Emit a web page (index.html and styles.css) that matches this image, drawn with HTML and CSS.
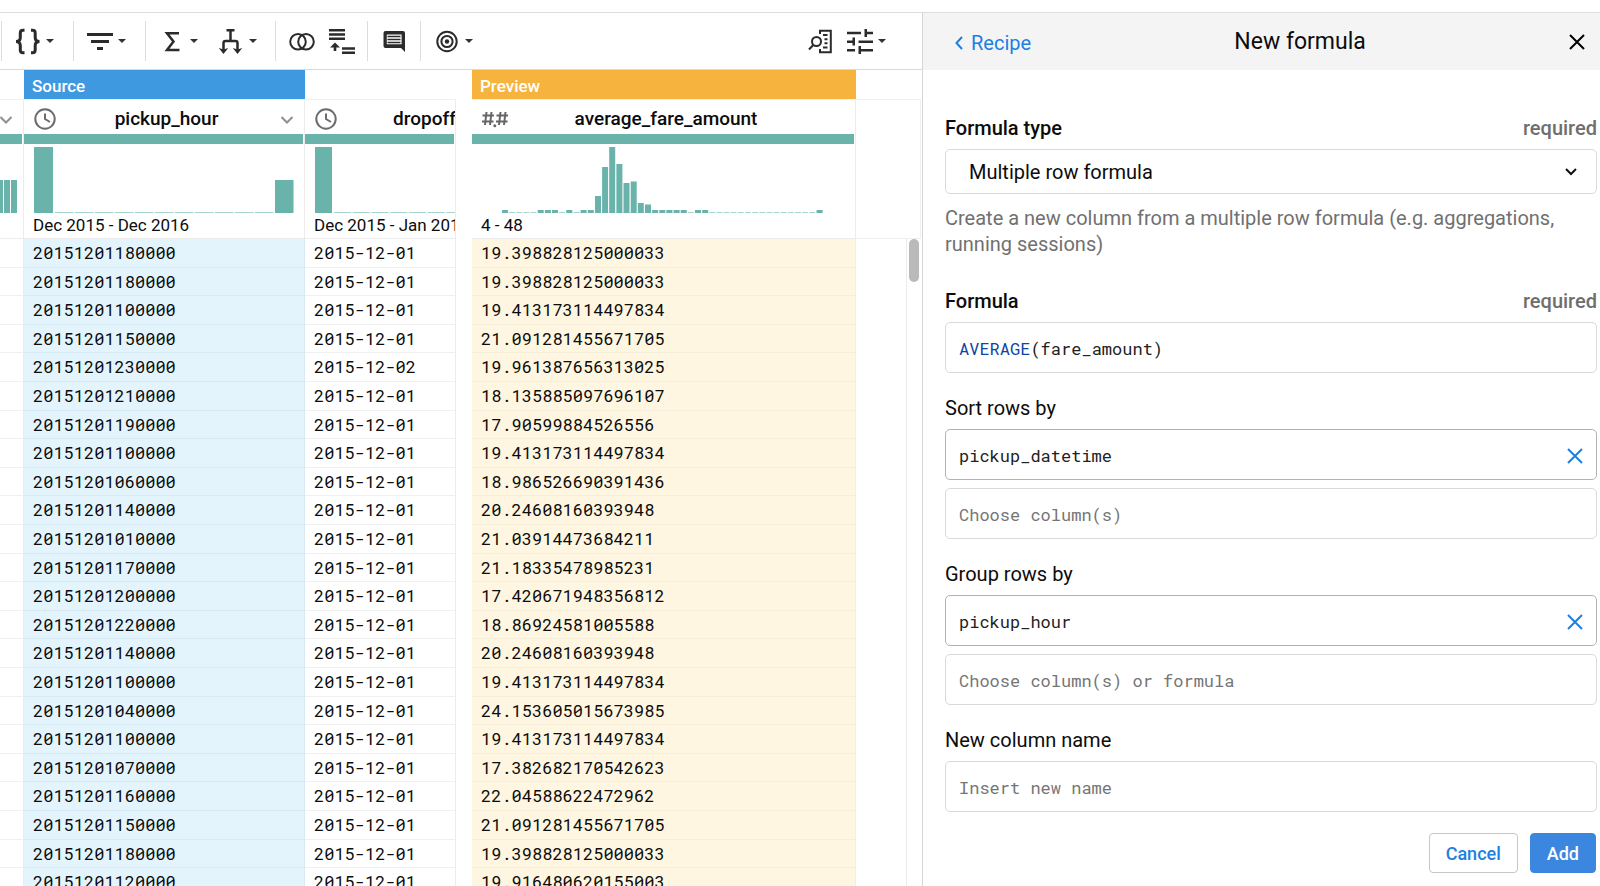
FILE: index.html
```html
<!DOCTYPE html>
<html lang="en">
<head>
<meta charset="utf-8">
<title>New formula</title>
<link rel="stylesheet" href="styles.css">
</head>
<body>
<div class="app">
  <main class="workspace">
    <div class="toolbar" role="toolbar" aria-label="Transform tools">
      <div class="tool-group">
        <button class="tool" aria-label="Format"><svg class="icon" viewBox="0 0 26 26"><path d="M9.500 2.300H8Q5.300 2.300 5.300 5V9.500Q5.300 13.500 1 13.500Q5.300 13.500 5.300 17.500V22Q5.300 24.700 8 24.700H9.500M16 2.300h1.500Q20.200 2.300 20.200 5V9.500Q20.200 13.500 24.500 13.500Q20.200 13.500 20.200 17.500V22Q20.200 24.700 17.500 24.700H16" class="line braces"/></svg><svg class="caret" viewBox="0 0 8 4"><path d="M0 0h8L4 4z"/></svg></button>
      </div>
      <div class="tool-group">
        <button class="tool" aria-label="Filter"><svg class="icon" viewBox="0 0 26 26"><path d="M0 5h26v3H0zM4 12h18v3H4zM10 19h6v3h-6z"/></svg><svg class="caret" viewBox="0 0 8 4"><path d="M0 0h8L4 4z"/></svg></button>
      </div>
      <div class="tool-group transforms">
        <button class="tool" aria-label="Aggregate"><svg class="icon" viewBox="0 0 26 26"><path d="M20 5.300H8L14.500 13.500 8 22H20.500" class="line heavy"/></svg><svg class="caret" viewBox="0 0 8 4"><path d="M0 0h8L4 4z"/></svg></button>
        <button class="tool" aria-label="Restructure"><svg class="icon" viewBox="0 0 26 26"><path d="M8.500 2.200h8M12.500 2v10.500M5.500 22v-7q0-2 2-2h10q2 0 2 2v7" class="line heavy"/><path d="M0.800 20l4.700 1.500 4.700-1.500-4.700 6zM14.800 20l4.700 1.500 4.700-1.500-4.700 6z"/></svg><svg class="caret" viewBox="0 0 8 4"><path d="M0 0h8L4 4z"/></svg></button>
      </div>
      <div class="tool-group even">
        <button class="tool" aria-label="Join"><svg class="icon" viewBox="0 0 26 26"><circle cx="9" cy="13.700" r="7.800" class="line"/><circle cx="17" cy="13.700" r="7.800" class="line"/></svg></button>
        <button class="tool" aria-label="Union"><svg class="icon" viewBox="0 0 26 26"><path d="M1 1h16v2.400H1zM1 5.300h16v2.400H1zM1 9.600h16v2.400H1zM14 19.300h13v2.400H14zM14 23.600h13v2.400H14zM7 14.500l5 5H8.300v3.500H5.700v-3.500H2z"/></svg></button>
      </div>
      <div class="tool-group even">
        <button class="tool" aria-label="Comment"><svg class="icon" viewBox="0 0 26 26"><path fill-rule="evenodd" d="M4.500 3h17.500a2 2 0 0 1 2 2v19l-4-4H4.500a2 2 0 0 1-2-2V5a2 2 0 0 1 2-2zM5.800 6.500v9.800h14.800V6.500z"/><path d="M6.500 7.700h13v1.500h-13zM6.500 10.700h13v1.500h-13zM6.500 13.700h13v1.500h-13z"/></svg></button>
      </div>
      <div class="tool-group">
        <button class="tool" aria-label="Target"><svg class="icon" viewBox="0 0 26 26"><circle cx="13" cy="13.500" r="9.700" class="line"/><circle cx="13" cy="13.500" r="5.600" class="line"/><circle cx="13" cy="13.500" r="2.200"/></svg><svg class="caret" viewBox="0 0 8 4"><path d="M0 0h8L4 4z"/></svg></button>
      </div>
      <div class="tool-group view-tools">
        <button class="tool" aria-label="Find column"><svg class="icon" viewBox="0 0 26 26"><path d="M12 6V2.800h10.800v21.400H12V21" class="line"/><circle cx="8.500" cy="13.500" r="4.500" class="line"/><path d="M5.300 17L1 21.500M15 7h4.500M16.500 11.200h3M16.500 15.200h3M15 19.500h4.500" class="line"/></svg></button>
        <button class="tool" aria-label="View options"><svg class="icon" viewBox="0 0 26 26"><path d="M0 3.800h14v2.500H0zM17.500 1H20v2.800h6v2.500h-6V9h-2.500zM0 12.400h5.500V9.600H8v8H5.500v-2.700H0zM11.500 12.400H26v2.500H11.500zM0 21h8v2.500H0zM11.500 18H14v3h12v2.500H14V26h-2.500z"/></svg><svg class="caret" viewBox="0 0 8 4"><path d="M0 0h8L4 4z"/></svg></button>
      </div>
    </div>

    <div class="grid">
      <table class="source-table">
        <colgroup><col class="col-edge"><col class="col-wide"><col></colgroup>
        <thead>
          <tr class="banner"><td></td><td class="banner-source">Source</td><td></td></tr>
          <tr class="profile">
            <th scope="col" aria-label="Previous column">
              <div class="name-row edge"><svg class="chevron" viewBox="0 0 14 14"><path d="M0.500 5l5.500 5.500L11.500 5"/></svg></div>
              <div class="quality"></div>
              <svg class="histogram" width="20" height="69"><path class="bar" d="M0 36h3v33H0zM4 36h6v33H4zM11 36h6v33h-6z"/></svg>
            </th>
            <th scope="col">
              <div class="name-row"><span class="type"><svg class="clock" viewBox="0 0 22 22"><circle cx="11" cy="11" r="9.700"/><path d="M11 5.500V11l5 3"/></svg></span><span class="name">pickup_hour</span><span class="menu"><svg class="chevron" viewBox="0 0 14 14"><path d="M0.500 5l5.500 5.500L11.500 5"/></svg></span></div>
              <div class="quality"></div>
              <svg class="histogram" width="280" height="69"><path class="bar" d="M10 3h19v66H10zM251 36h18.500v33H251z"/><path class="thin" d="M31 68.500H250" stroke-dasharray="18.500 1.500"/></svg>
              <div class="range">Dec 2015 - Dec 2016</div>
            </th>
            <th scope="col">
              <div class="name-row clipped"><span class="type"><svg class="clock" viewBox="0 0 22 22"><circle cx="11" cy="11" r="9.700"/><path d="M11 5.500V11l5 3"/></svg></span><span class="name">dropoff_hour</span><span class="menu"></span></div>
              <div class="quality"></div>
              <svg class="histogram" width="280" height="69"><path class="bar" d="M10 3h17v66H10z"/><path class="thin" d="M29 68.500H270" stroke-dasharray="17.200 1.500"/></svg>
              <div class="range">Dec 2015 - Jan 2016</div>
            </th>
          </tr>
        </thead>
        <tbody>
          <tr><td></td><td>20151201180000</td><td>2015-12-01</td></tr>
          <tr><td></td><td>20151201180000</td><td>2015-12-01</td></tr>
          <tr><td></td><td>20151201100000</td><td>2015-12-01</td></tr>
          <tr><td></td><td>20151201150000</td><td>2015-12-01</td></tr>
          <tr><td></td><td>20151201230000</td><td>2015-12-02</td></tr>
          <tr><td></td><td>20151201210000</td><td>2015-12-01</td></tr>
          <tr><td></td><td>20151201190000</td><td>2015-12-01</td></tr>
          <tr><td></td><td>20151201100000</td><td>2015-12-01</td></tr>
          <tr><td></td><td>20151201060000</td><td>2015-12-01</td></tr>
          <tr><td></td><td>20151201140000</td><td>2015-12-01</td></tr>
          <tr><td></td><td>20151201010000</td><td>2015-12-01</td></tr>
          <tr><td></td><td>20151201170000</td><td>2015-12-01</td></tr>
          <tr><td></td><td>20151201200000</td><td>2015-12-01</td></tr>
          <tr><td></td><td>20151201220000</td><td>2015-12-01</td></tr>
          <tr><td></td><td>20151201140000</td><td>2015-12-01</td></tr>
          <tr><td></td><td>20151201100000</td><td>2015-12-01</td></tr>
          <tr><td></td><td>20151201040000</td><td>2015-12-01</td></tr>
          <tr><td></td><td>20151201100000</td><td>2015-12-01</td></tr>
          <tr><td></td><td>20151201070000</td><td>2015-12-01</td></tr>
          <tr><td></td><td>20151201160000</td><td>2015-12-01</td></tr>
          <tr><td></td><td>20151201150000</td><td>2015-12-01</td></tr>
          <tr><td></td><td>20151201180000</td><td>2015-12-01</td></tr>
          <tr><td></td><td>20151201120000</td><td>2015-12-01</td></tr>
        </tbody>
      </table>

      <table class="preview-table">
        <thead>
          <tr class="banner"><td class="banner-preview">Preview</td></tr>
          <tr class="profile">
            <th scope="col">
              <div class="name-row"><span class="type"><svg class="decimal" viewBox="0 0 26 18"><path d="M4.500 2L3 15M9.500 2L8 15M0.500 5.500H12M0 11.500h11.500M18.500 2L17 15M23.500 2L22 15M14.500 5.500H26M14 11.500h11.500"/><circle cx="12.800" cy="15.700" r="1.500"/></svg></span><span class="name">average_fare_amount</span><span class="menu"></span></div>
              <div class="quality"></div>
              <svg class="histogram" width="380" height="69"><path class="thin" d="M30 68.500H350" stroke-dasharray="5.750 1.400"/><path class="bar" transform="translate(-1 0)" d="M31 66h6v3h-6zM66.700 66h6v3h-6zM73.900 66h6v3h-6zM81 66h6v3h-6zM95.300 66h6v3h-6zM109.600 66h6v3h-6zM116.800 66h6v3h-6zM124 52h6v17h-6zM131.100 23h6v46h-6zM138.200 3h6v66h-6zM145.400 20h6v49h-6zM152.500 39h6v30h-6zM159.700 37.500h6v31.500h-6zM166.800 59h6v10h-6zM174 60.500h6v8.500h-6zM181.100 66h6v3h-6zM188.300 66h6v3h-6zM195.400 66h6v3h-6zM202.600 66h6v3h-6zM209.700 66h6v3h-6zM224 66h6v3h-6zM231.200 66h6v3h-6zM345.600 66h6v3h-6z"/></svg>
              <div class="range">4 - 48</div>
            </th>
          </tr>
        </thead>
        <tbody>
          <tr><td>19.398828125000033</td></tr>
          <tr><td>19.398828125000033</td></tr>
          <tr><td>19.413173114497834</td></tr>
          <tr><td>21.091281455671705</td></tr>
          <tr><td>19.961387656313025</td></tr>
          <tr><td>18.135885097696107</td></tr>
          <tr><td>17.90599884526556</td></tr>
          <tr><td>19.413173114497834</td></tr>
          <tr><td>18.986526690391436</td></tr>
          <tr><td>20.24608160393948</td></tr>
          <tr><td>21.03914473684211</td></tr>
          <tr><td>21.18335478985231</td></tr>
          <tr><td>17.420671948356812</td></tr>
          <tr><td>18.86924581005588</td></tr>
          <tr><td>20.24608160393948</td></tr>
          <tr><td>19.413173114497834</td></tr>
          <tr><td>24.153605015673985</td></tr>
          <tr><td>19.413173114497834</td></tr>
          <tr><td>17.382682170542623</td></tr>
          <tr><td>22.04588622472962</td></tr>
          <tr><td>21.091281455671705</td></tr>
          <tr><td>19.398828125000033</td></tr>
          <tr><td>19.916480620155003</td></tr>
        </tbody>
      </table>

      <div class="gutter">
        <div class="gutter-head"></div>
        <div class="scroll-track"><div class="scroll-thumb"></div></div>
      </div>
    </div>
  </main>

  <aside class="panel">
    <header class="panel-head">
      <a class="back" href="#recipe"><svg viewBox="0 0 8 14"><path d="M7 1L1.500 7 7 13"/></svg>Recipe</a>
      <h1>New formula</h1>
      <button class="close" aria-label="Close"><svg class="cross" viewBox="0 0 16 16"><path d="M1 1l14 14M15 1L1 15"/></svg></button>
    </header>
    <form class="panel-form">
      <div class="field">
        <div class="label-row strong"><label for="type">Formula type</label><span class="required">required</span></div>
        <div class="select-box">
          <select id="type"><option>Multiple row formula</option></select>
          <svg viewBox="0 0 12 8"><path d="M1 1l5 5 5-5"/></svg>
        </div>
        <p class="hint">Create a new column from a multiple row formula (e.g. aggregations, running sessions)</p>
      </div>
      <div class="field after-hint">
        <div class="label-row strong"><span id="formula-label">Formula</span><span class="required">required</span></div>
        <div class="box" role="textbox" contenteditable="true" spellcheck="false" aria-labelledby="formula-label"><span class="fn">AVERAGE</span>(fare_amount)</div>
      </div>
      <div class="field">
        <div class="label-row"><label for="sort">Sort rows by</label></div>
        <div class="stack">
          <div class="box chosen"><input id="sort" value="pickup_datetime"><button type="button" class="clear" aria-label="Remove pickup_datetime"><svg class="cross" viewBox="0 0 16 16"><path d="M1 1l14 14M15 1L1 15"/></svg></button></div>
          <div class="box"><input placeholder="Choose column(s)" aria-label="Sort column"></div>
        </div>
      </div>
      <div class="field">
        <div class="label-row"><label for="group">Group rows by</label></div>
        <div class="stack">
          <div class="box chosen"><input id="group" value="pickup_hour"><button type="button" class="clear" aria-label="Remove pickup_hour"><svg class="cross" viewBox="0 0 16 16"><path d="M1 1l14 14M15 1L1 15"/></svg></button></div>
          <div class="box"><input placeholder="Choose column(s) or formula" aria-label="Group column"></div>
        </div>
      </div>
      <div class="field">
        <div class="label-row"><label for="name">New column name</label></div>
        <div class="box"><input id="name" placeholder="Insert new name"></div>
      </div>
      <div class="actions">
        <button type="button" class="btn">Cancel</button>
        <button type="button" class="btn primary">Add</button>
      </div>
    </form>
  </aside>
</div>
</body>
</html>
```
FILE: styles.css
```css
* { box-sizing: border-box; }
body {
  margin: 0;
  background: #fff;
  color: #0c0c0c;
  font-family: Roboto, "Liberation Sans", sans-serif;
}
button { padding: 0; border: 0; background: none; font: inherit; cursor: pointer; }

.app {
  display: grid;
  grid-template-columns: minmax(0, 1fr) 678px;
  height: 100vh;
  padding-top: 12px;
  overflow: hidden;
}
.workspace { min-width: 0; border-top: 1px solid #ddd; overflow: hidden; }

/* Toolbar */
.toolbar {
  display: flex;
  align-items: center;
  height: 57px;
  padding: 0 36px 0 1px;
  border-bottom: 1px solid #d9d9d9;
}
.tool-group {
  display: flex;
  align-items: center;
  gap: 20px;
  height: 40px;
  padding: 0 19px 0 13px;
  border-left: 1px solid #dcdcdc;
}
.tool-group.transforms { padding-right: 18px; }
.tool-group.even { gap: 13px; padding-right: 13px; }
.view-tools { gap: 13px; margin-left: auto; padding: 0; border: 0; }
.tool { display: flex; align-items: center; gap: 5px; }
.icon { width: 26px; height: 26px; fill: #2b2b2b; overflow: visible; }
.icon .line { fill: none; stroke: #2b2b2b; stroke-width: 2; }
.icon .heavy { stroke-width: 2.5; }
.icon .braces { stroke-width: 3; }
.caret { width: 8px; height: 4px; fill: #333; }

/* Data grid */
.grid { display: flex; align-items: flex-start; }
table { border-collapse: separate; border-spacing: 0; table-layout: fixed; }
.source-table { width: 456px; margin-right: 16px; }
.preview-table { width: 384px; }
.col-edge { width: 24px; }
.col-wide { width: 281px; }

td, th { padding: 0; overflow: hidden; border-right: 1px solid #ececec; }
.banner td {
  height: 29px;
  padding: 2px 0 0 8px;
  border: 0;
  color: #fff;
  font-size: 17px;
  font-weight: 500;
}
.banner .banner-source { background: #3f99e1; }
.banner .banner-preview { background: #f6b43f; }

.profile th {
  height: 140px;
  border-top: 1px solid #f0f0f0;
  border-bottom: 1px solid #ececec;
  vertical-align: top;
  text-align: left;
  font-weight: 400;
}
.name-row { display: flex; align-items: center; height: 34px; padding: 3px 9px 0 10px; }
.name-row.clipped { width: 281px; }
.name-row.edge { justify-content: flex-end; padding-left: 0; }
.type { display: flex; width: 26px; }
.menu { display: flex; justify-content: flex-end; width: 22px; }
.name { flex: 1; text-align: center; font-size: 19px; font-weight: 500; }
.clock { width: 22px; height: 22px; fill: none; stroke: #6b6b6b; stroke-width: 2; }
.decimal { flex: none; width: 26px; height: 18px; fill: #666; stroke: #666; stroke-width: 2; }
.decimal circle { stroke: none; }
.chevron { flex: none; width: 14px; height: 14px; fill: none; stroke: #8f8f8f; stroke-width: 2; }
.quality { height: 10px; margin-right: 1px; background: #69b3ab; }
.histogram { display: block; }
.bar { fill: #69b3ab; }
.thin { fill: none; stroke: #a5d3ce; stroke-width: 1; }
.range { padding-left: 9px; font-size: 17px; line-height: 24px; white-space: nowrap; }

tbody td {
  height: 29px;
  padding-left: 9px;
  border-bottom: 1px solid #f0f0f0;
  font-family: "Roboto Mono", "Liberation Mono", monospace;
  font-size: 17px;
  line-height: 20px;
  white-space: nowrap;
}
tbody tr:nth-child(5n + 2) td, tbody tr:nth-child(5n + 4) td { height: 28px; }
.source-table tbody td:nth-child(2) { background: #e3f4fd; border-color: #d7eaf3; }
.preview-table tbody td { background: #fef6e0; border-color: #f5eedb; }

.gutter { display: flex; flex: 1; flex-direction: column; align-items: flex-end; align-self: stretch; padding: 29px 1px 0 0; }
.gutter-head { width: 100%; height: 140px; border: 1px solid #f0f0f0; border-left: 0; }
.scroll-track { flex: 1; width: 15px; padding: 0 2px; border-left: 1px solid #ececec; }
.scroll-thumb { height: 43px; border-radius: 5px; background: #bababa; }

/* Formula panel */
.panel { border-left: 1px solid #d6d6d6; }
.panel-head {
  display: flex;
  align-items: center;
  justify-content: space-between;
  height: 58px;
  padding: 0 15px 0 32px;
  border-top: 1px solid #ddd;
  background: #f4f4f4;
}
.panel-head h1 { margin: 0; font-size: 23px; font-weight: 400; }
.back { display: flex; align-items: center; gap: 8px; padding-top: 2px; color: #1b7fe3; font-size: 20px; text-decoration: none; }
.back svg { width: 8px; height: 14px; fill: none; stroke: currentColor; stroke-width: 2; }
.close { display: flex; }
.cross { width: 16px; height: 16px; fill: none; stroke: currentColor; stroke-width: 2; }

.panel-form { padding: 46px 3px 0 22px; }
.field + .field { margin-top: 23px; }
.field + .after-hint { margin-top: 32px; }
.label-row { display: flex; justify-content: space-between; margin-bottom: 9px; font-size: 20px; line-height: 24px; }
.strong { font-weight: 500; }
.required { color: #6e6e6e; }
.select-box, .box { display: flex; align-items: center; border: 1px solid #d9d9d9; border-radius: 5px; }
.select-box { height: 45px; padding-right: 19px; }
.select-box select {
  flex: 1;
  height: 100%;
  padding: 0 0 0 23px;
  border: 0;
  background: none;
  color: inherit;
  font: inherit;
  font-size: 20px;
  appearance: none;
}
.select-box svg { width: 12px; height: 8px; fill: none; stroke: #111; stroke-width: 2; }
.hint { margin: 11px 0 0; color: #707070; font-size: 20px; line-height: 26px; }

.box {
  height: 51px;
  padding: 2px 13px 0;
  color: #222;
  font-family: "Roboto Mono", "Liberation Mono", monospace;
  font-size: 17px;
}
.box.chosen { border-color: #b3b3b3; }
.box input { flex: 1; min-width: 0; padding: 0; border: 0; outline: 0; background: none; color: inherit; font: inherit; }
.box input::placeholder { color: #757575; opacity: 1; }
.fn { color: #0d47a1; }
.clear { display: flex; color: #1b7fe3; }
.stack { display: grid; gap: 8px; }

.actions { display: flex; justify-content: flex-end; gap: 12px; margin-top: 21px; padding-right: 1px; }
.btn {
  height: 40px;
  padding: 0 16px;
  border: 1px solid #c6c6c6;
  border-radius: 4px;
  color: #1b7fe3;
  font-size: 18px;
  font-weight: 500;
}
.btn.primary { border-color: #3b87df; background: #3b87df; color: #fff; }
```
